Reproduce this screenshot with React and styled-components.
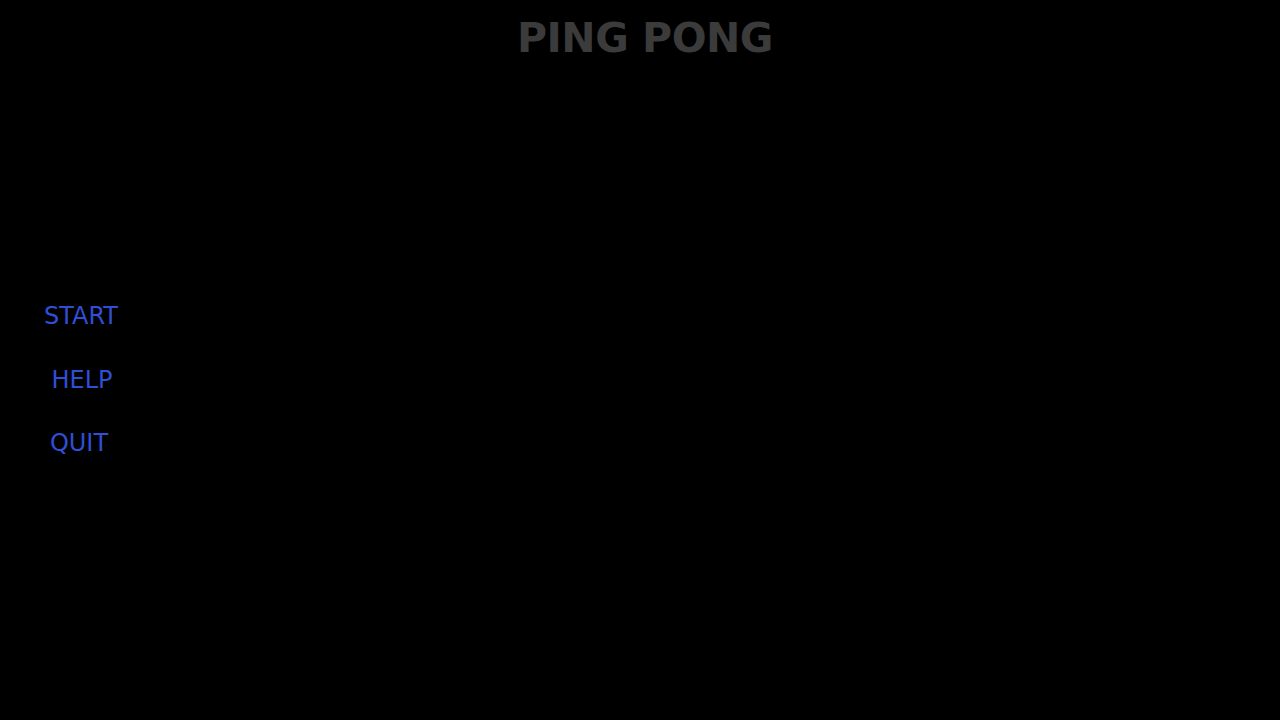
import React from 'react';
import styled, { createGlobalStyle } from 'styled-components';

const GlobalStyle = createGlobalStyle`
    html, body {
        margin: 0;
        padding: 0;
        background: #000;
        height: 100%;
    }
    #root {
        height: 100%;
    }
`

const Screen = styled.div`
    position: relative;
    width: 100%;
    height: 100vh;
    background: #000;
    overflow: hidden;
    font-family: "DejaVu Sans", "Noto Sans", sans-serif;
`

const Title = styled.h1`
    margin: 0;
    padding-top: 16px;
    text-align: center;
    font-size: 41px;
    font-weight: 700;
    line-height: 44px;
    color: #3b3b3b;
    letter-spacing: -0.5px;
    padding-left: 10px;
`

const Menu = styled.nav`
    display: flex;
    flex-direction: column;
    align-items: center;
    width: 162px;
    margin-top: 242px;
    gap: 34.5px;
`

const MenuItem = styled.button`
    background: none;
    border: none;
    padding: 0;
    font-family: inherit;
    font-size: 24px;
    line-height: 29px;
    color: #2f4fd6;
    cursor: pointer;
    margin-left: ${p => p.$shift || 0}px;
`

const App = () => {
    return (
        <Screen>
            <GlobalStyle />
            <Title>PING PONG</Title>
            <Menu>
                <MenuItem>START</MenuItem>
                <MenuItem $shift={2}>HELP</MenuItem>
                <MenuItem $shift={-4}>QUIT</MenuItem>
            </Menu>
        </Screen>
    )
}

export default App;
